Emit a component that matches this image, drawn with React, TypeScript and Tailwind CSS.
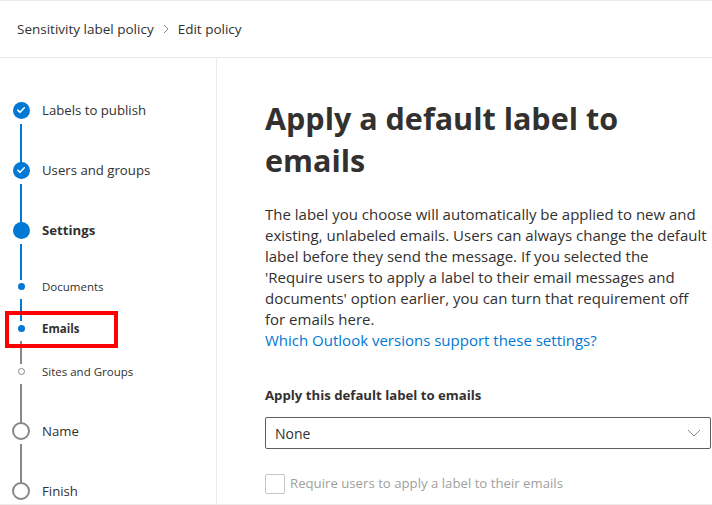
import React from "react";

type StepKind = "done" | "current" | "subDone" | "subCurrent" | "subTodo" | "todo";

interface Step {
  label: string;
  kind: StepKind;
  gap: number; // distance from this step's center to the next step's center
  line?: "blue" | "gray";
}

const steps: Step[] = [
  { label: "Labels to publish", kind: "done", gap: 60, line: "blue" },
  { label: "Users and groups", kind: "done", gap: 60, line: "blue" },
  { label: "Settings", kind: "current", gap: 56, line: "blue" },
  { label: "Documents", kind: "subDone", gap: 42, line: "blue" },
  { label: "Emails", kind: "subCurrent", gap: 43, line: "gray" },
  { label: "Sites and Groups", kind: "subTodo", gap: 60, line: "gray" },
  { label: "Name", kind: "todo", gap: 60, line: "gray" },
  { label: "Finish", kind: "todo", gap: 0 },
];

const paragraphLines = [
  "The label you choose will automatically be applied to new and",
  "existing, unlabeled emails. Users can always change the default",
  "label before they send the message. If you selected the",
  "'Require users to apply a label to their email messages and",
  "documents' option earlier, you can turn that requirement off",
  "for emails here.",
];

const StepMarker: React.FC<{ kind: StepKind }> = ({ kind }) => {
  if (kind === "done") {
    return (
      <div className="w-[17px] h-[17px] rounded-full bg-[#0078d4] flex items-center justify-center">
        <svg width="10" height="10" viewBox="0 0 10 10">
          <polyline points="1.8,5.2 4,7.3 8.3,2.8" fill="none" stroke="#fff" strokeWidth="1.6" strokeLinecap="round" strokeLinejoin="round" />
        </svg>
      </div>
    );
  }
  if (kind === "current") return <div className="w-[17px] h-[17px] rounded-full bg-[#0078d4]" />;
  if (kind === "subDone" || kind === "subCurrent")
    return <div className="w-[7px] h-[7px] rounded-full bg-[#0078d4]" />;
  if (kind === "subTodo")
    return <div className="w-[7px] h-[7px] rounded-full border-[1.5px] border-[#8a8886] bg-white" />;
  return <div className="w-[18px] h-[18px] rounded-full border-2 border-[#8a8886] bg-white" />;
};

const Stepper: React.FC = () => (
  <div className="flex flex-col pt-[42px]">
    {steps.map((s) => {
      const isSub = s.kind.startsWith("sub");
      const bold = s.kind === "current" || s.kind === "subCurrent";
      return (
        <React.Fragment key={s.label}>
          <div className="flex items-center h-[20px]">
            <div className="w-[42px] flex justify-center">
              <StepMarker kind={s.kind} />
            </div>
            <span
              className={`${isSub ? "text-[11.5px]" : "text-[13.2px]"} ${
                bold ? "font-bold" : ""
              } text-[#323130] leading-none pt-[2px]`}
            >
              {s.label}
            </span>
          </div>
          {s.gap > 0 && (
            <div className="w-[42px] flex justify-center" style={{ height: s.gap - 20 }}>
              <div
                className={`w-[2px] h-full ${isSub || s.kind === "todo" ? "my-[3px]" : "my-[4px]"} ${
                  s.line === "blue" ? "bg-[#0078d4]" : "bg-[#8a8886]"
                }`}
              />
            </div>
          )}
        </React.Fragment>
      );
    })}
  </div>
);

export default function App() {
  return (
    <div
      className="w-[712px] h-[505px] bg-white flex flex-col border-t border-[#edebe9] overflow-hidden text-[#323130]"
      style={{ fontFamily: '"Segoe UI", "Open Sans", sans-serif' }}
    >
      {/* Breadcrumb header */}
      <header className="h-[57px] shrink-0 border-b border-[#edebe9] flex items-center px-[17px] text-[13.5px]">
        <span className="text-[#323130]">Sensitivity label policy</span>
        <svg className="mx-[8px]" width="8" height="12" viewBox="0 0 8 12">
          <polyline points="2,2 6,6 2,10" fill="none" stroke="#8a8886" strokeWidth="1" />
        </svg>
        <span className="text-[#323130]">Edit policy</span>
      </header>

      {/* Body */}
      <div className="flex flex-1 border-b border-[#edebe9] min-h-0">
        <aside className="w-[217px] shrink-0 border-r border-[#edebe9] relative">
          <Stepper />
          {/* highlight box */}
          <div className="absolute left-[5px] top-[253px] w-[113px] h-[37px] border-[4px] border-[#ff0000]" />
        </aside>

        <main className="flex-1 pl-[48px] pt-[39px]">
          <h1 className="text-[30.5px] leading-[42px] font-bold text-[#323130] w-[380px]">
            Apply a default label to emails
          </h1>
          <p className="mt-[23px] text-[15px] leading-[21px] text-[#323130] whitespace-nowrap">
            {paragraphLines.map((l) => (
              <React.Fragment key={l}>
                {l}
                <br />
              </React.Fragment>
            ))}
            <span className="text-[#0078d4]">Which Outlook versions support these settings?</span>
          </p>

          <div className="mt-[34px] text-[13.2px] leading-[20px] font-bold">Apply this default label to emails</div>
          <div className="mt-[12px] w-[446px] h-[32px] border border-[#605e5c] rounded-[2px] flex items-center justify-between pl-[9px] pr-[9px] text-[14px]">
            <span>None</span>
            <svg width="14" height="8" viewBox="0 0 14 8">
              <polyline points="1,1 7,7 13,1" fill="none" stroke="#8a8886" strokeWidth="1" />
            </svg>
          </div>

          <label className="mt-[25px] flex items-center gap-[5px] text-[13.2px] text-[#a19f9d]">
            <span className="w-[20px] h-[20px] border border-[#c8c6c4] rounded-[2px] bg-white" />
            Require users to apply a label to their emails
          </label>
        </main>
      </div>
    </div>
  );
}
